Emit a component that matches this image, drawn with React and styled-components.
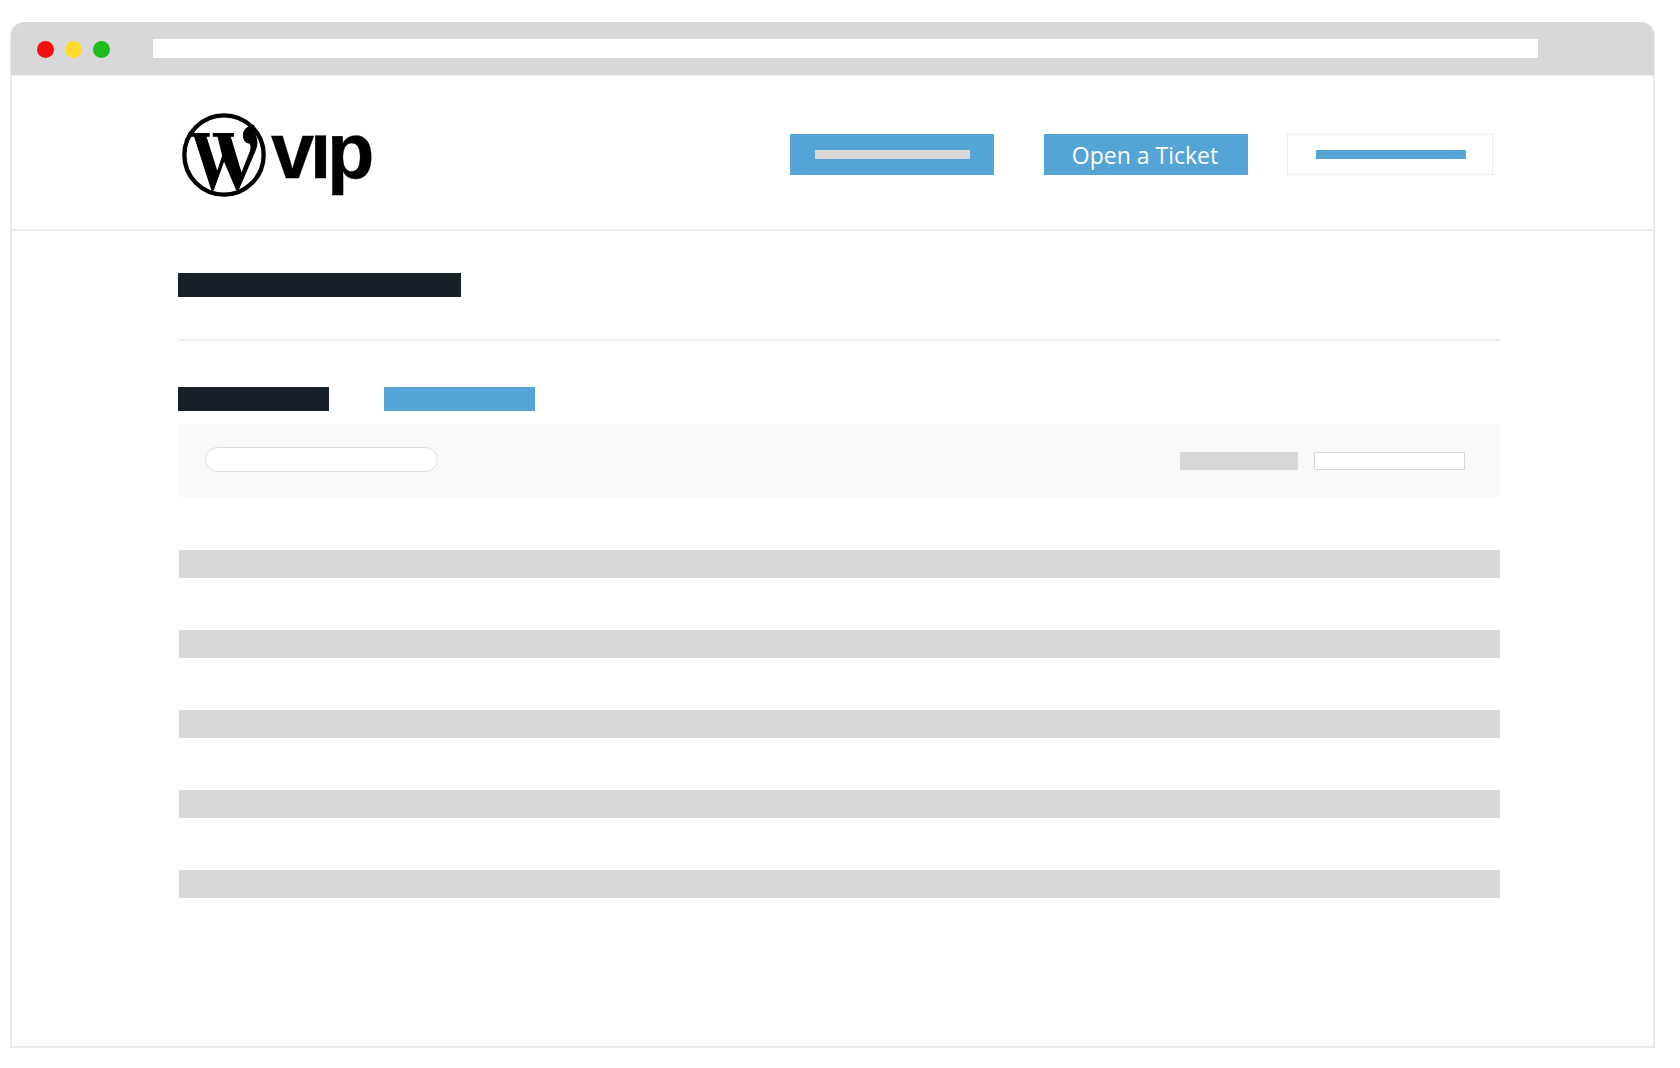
import React from 'react';
import styled, { createGlobalStyle } from 'styled-components';

const GlobalStyle = createGlobalStyle`
  * { box-sizing: border-box; }
  body {
    margin: 0;
    background: #fff;
    font-family: "Open Sans", "Liberation Sans", sans-serif;
  }
`;

const Page = styled.div`
  padding: 22px 25px 20px 10px;
`;

const Window = styled.div`
  height: 1026px;
  border: 2px solid #e9eaea;
  border-top: 0;
  border-radius: 14px 14px 0 0;
`;

const Chrome = styled.div`
  display: flex;
  align-items: center;
  gap: 11px;
  height: 54px;
  margin: 0 -1px;
  padding-left: 26px;
  background: #d8d8d8;
  border-bottom: 1px solid #ebecec;
  border-radius: 14px 14px 0 0;
`;

const Dot = styled.span`
  width: 17px;
  height: 17px;
  margin-top: 2px;
  border-radius: 50%;
  background: ${(p) => p.$color};
`;

const AddressBar = styled.div`
  width: 1385px;
  height: 19px;
  margin-left: 32px;
  background: #fff;
`;

const Header = styled.header`
  display: flex;
  align-items: center;
  justify-content: space-between;
  height: 155px;
  padding: 4px 160px 0 170px;
  border-bottom: 2px solid #e9eded;
`;

const Logo = styled.div`
  display: flex;
  align-items: center;
  gap: 5px;
  color: #000;
`;

const LogoSvg = styled.svg`
  display: block;
  width: 84px;
  height: 84px;
  flex: none;
`;

const LogoWord = styled.span`
  display: block;
  font-family: "Liberation Sans", Arial, sans-serif;
  font-size: 80px;
  font-weight: 700;
  line-height: 84px;
  letter-spacing: -4.5px;
  margin-top: -8px;
  -webkit-text-stroke: 0.4px #000;
  transform: scaleX(0.97);
  transform-origin: left center;
`;

const Actions = styled.div`
  display: flex;
  align-items: center;
`;

const ActionButton = styled.button`
  display: flex;
  align-items: center;
  justify-content: center;
  width: ${(p) => (p.$outline ? 206 : 204)}px;
  height: 41px;
  margin-left: ${(p) => p.$gap}px;
  padding: ${(p) => p.$pad || '0'};
  border: ${(p) => (p.$outline ? '1.5px solid #e9eded' : '0')};
  background: ${(p) => (p.$outline ? '#fff' : '#55a4d6')};
  color: #fff;
  font-family: "Open Sans", sans-serif;
  font-size: 23px;
  font-weight: 400;
`;

const ButtonBar = styled.span`
  display: block;
  width: ${(p) => p.$width}px;
  height: 9px;
  background: ${(p) => p.$color};
`;

const Content = styled.main`
  padding: 42px 153px 0 166px;
`;

const Title = styled.div`
  width: 283px;
  height: 24px;
  background: #171f28;
`;

const Divider = styled.hr`
  height: 2px;
  margin: 42px 0 46px 1px;
  border: 0;
  background: #e9eded;
`;

const Tabs = styled.div`
  display: flex;
  gap: 55px;
`;

const Tab = styled.div`
  width: 151px;
  height: 24px;
  background: ${(p) => (p.$active ? '#171f28' : '#55a4d6')};
`;

const Toolbar = styled.div`
  display: flex;
  align-items: center;
  justify-content: space-between;
  height: 73px;
  margin-top: 13px;
  padding: 0 35px 0 27px;
  background: #f9f9f9;
`;

const SearchBox = styled.div`
  width: 233px;
  height: 25px;
  margin-top: -2px;
  border: 1px solid #dcdcdc;
  border-radius: 13px;
  background: #fff;
`;

const Pager = styled.div`
  display: flex;
  gap: 16px;
`;

const PagerLabel = styled.div`
  width: 118px;
  height: 18px;
  background: #d8d8d8;
`;

const PagerSelect = styled.div`
  width: 151px;
  height: 18px;
  border: 1px solid #d8d8d8;
  background: #fff;
`;

const Rows = styled.div`
  display: flex;
  flex-direction: column;
  gap: 52px;
  margin: 53px 0 0 1px;
`;

const Row = styled.div`
  height: 28px;
  background: #d8d8d8;
`;

// ring and W traced from the logo
const WpMark = () => (
  <LogoSvg viewBox="13 13 250 250">
    <circle cx="138" cy="138" r="118" fill="none" stroke="#000" strokeWidth="13" />
    <path
      fill="#000"
      stroke="#000"
      strokeWidth="3"
      d="M32 74H94V82H84L118 190L134 140L120 82H106V74H166V82H156L190 194L216 128C220 116 220 108 214 102C202 104 194 90 196 76C198 60 212 52 226 50C221 62 229 72 233 84C238 98 237 110 231 124L180 243H176L138 154L106 243H102L50 82H32Z"
    />
  </LogoSvg>
);

const App = () => {
  const rows = [1, 2, 3, 4, 5];

  return (
    <Page>
      <GlobalStyle />
      <Window>
        <Chrome>
          <Dot $color="#f70d0d" />
          <Dot $color="#ffd92a" />
          <Dot $color="#1dbd1d" />
          <AddressBar />
        </Chrome>
        <Header>
          <Logo>
            <WpMark />
            <LogoWord>vıp</LogoWord>
          </Logo>
          <Actions>
            <ActionButton $gap={0}>
              <ButtonBar $width={155} $color="#d8d8d8" />
            </ActionButton>
            <ActionButton $gap={50} $pad="0 2px 0 0">Open a Ticket</ActionButton>
            <ActionButton $gap={39} $outline $pad="0 0 0 2px">
              <ButtonBar $width={150} $color="#55a4d6" />
            </ActionButton>
          </Actions>
        </Header>
        <Content>
          <Title />
          <Divider />
          <Tabs>
            <Tab $active />
            <Tab />
          </Tabs>
          <Toolbar>
            <SearchBox />
            <Pager>
              <PagerLabel />
              <PagerSelect />
            </Pager>
          </Toolbar>
          <Rows>
            {rows.map((row) => (
              <Row key={row} />
            ))}
          </Rows>
        </Content>
      </Window>
    </Page>
  );
};

export default App;
